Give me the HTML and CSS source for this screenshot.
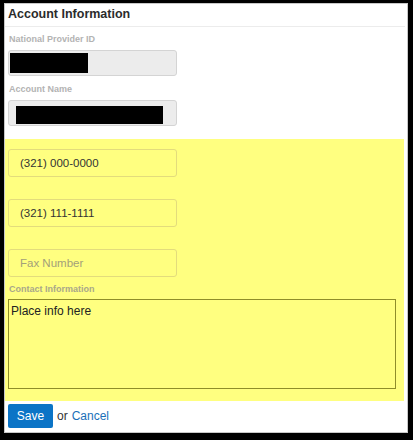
FILE: index.html
```html
<!DOCTYPE html>
<html lang="en">
<head>
    <meta charset="UTF-8">
    <title>Account Information</title>
    <link rel="stylesheet" href="styles.css">
</head>
<body>
    <div class="panel">
        <div class="panel-title">Account Information</div>

        <div class="group">
            <label class="field-label">National Provider ID</label>
            <div class="field readonly">
                <span class="redact redact-npi"></span>
            </div>
            <label class="field-label second">Account Name</label>
            <div class="field readonly">
                <span class="redact redact-name"></span>
            </div>
        </div>

        <div class="highlight">
            <input class="field phone" type="text" value="(321) 000-0000">
            <input class="field phone" type="text" value="(321) 111-1111">
            <input class="field phone" type="text" placeholder="Fax Number">
            <label class="field-label contact">Contact Information</label>
            <textarea class="notes">Place info here</textarea>
        </div>

        <div class="actions">
            <button class="btn-save">Save</button>
            <span class="or">or</span>
            <a class="cancel" href="#">Cancel</a>
        </div>
    </div>
</body>
</html>
```

FILE: styles.css
```css
html, body {
    height: 440px;
}
body {
    margin: 0;
    background: #000;
    padding: 3px 5px 7px 4px;
    box-sizing: border-box;
    font-family: "Liberation Sans", Arial, sans-serif;
    color: #333;
}
.panel {
    background: #fff;
    border: 1px solid #c8c8c8;
    height: 430px;
    box-sizing: border-box;
    display: flex;
    flex-direction: column;
}
.panel-title {
    height: 22px;
    line-height: 21px;
    padding-left: 3px;
    font-size: 12.5px;
    font-weight: bold;
    color: #2b2b2b;
    border-bottom: 1px solid #ececec;
    margin-right: 2px;
}
.group {
    padding-left: 3px;
    display: flex;
    flex-direction: column;
    align-items: flex-start;
}
.field-label {
    display: block;
    font-size: 9px;
    line-height: 12px;
    font-weight: bold;
    color: #b3b3b3;
    margin-top: 6px;
    margin-bottom: 5px;
    padding-left: 1px;
}
.field-label.second {
    margin-top: 7px;
}
.field {
    width: 169px;
    height: 26px;
    box-sizing: border-box;
    border: 1px solid #d4d4d4;
    border-radius: 3px;
}
.readonly {
    background: #ececec;
    position: relative;
}
.redact {
    position: absolute;
    background: #000;
}
.redact-npi {
    left: 1px;
    top: 2px;
    width: 78px;
    height: 20px;
}
.redact-name {
    left: 7px;
    top: 5px;
    width: 147px;
    height: 18px;
}
.highlight {
    margin-top: 13px;
    margin-right: 3px;
    background: #ffff80;
    padding: 10px 0 12px 3px;
    display: flex;
    flex-direction: column;
    align-items: flex-start;
}
.phone {
    height: 28px;
    background: #ffff80;
    border-color: #e3dc7c;
    font-family: "Liberation Sans", Arial, sans-serif;
    font-size: 11.5px;
    color: #333;
    padding: 0 11px;
    margin: 0 0 22px 0;
    outline: none;
}
.phone:last-of-type {
    margin-bottom: 0;
}
.phone::placeholder {
    color: #a3a07a;
}
.field-label.contact {
    margin-top: 6px;
    margin-bottom: 4px;
    color: #a9a78a;
}
.notes {
    width: 388px;
    height: 90px;
    box-sizing: border-box;
    margin: 0;
    background: #ffff80;
    border: 1px solid #8f8d2a;
    font-family: "Liberation Sans", Arial, sans-serif;
    font-size: 12px;
    color: #222;
    padding: 4px 2px;
    resize: none;
    outline: none;
}
.actions {
    padding: 3px 0 0 3px;
    display: flex;
    align-items: center;
    gap: 4px;
    font-size: 12px;
}
.btn-save {
    height: 24px;
    width: 45px;
    border: none;
    border-radius: 2px;
    background: #0b74c6;
    color: #fff;
    font-family: "Liberation Sans", Arial, sans-serif;
    font-size: 12px;
    padding: 0;
}
.or {
    color: #333;
}
.cancel {
    color: #1a6fb8;
    text-decoration: none;
}
```
